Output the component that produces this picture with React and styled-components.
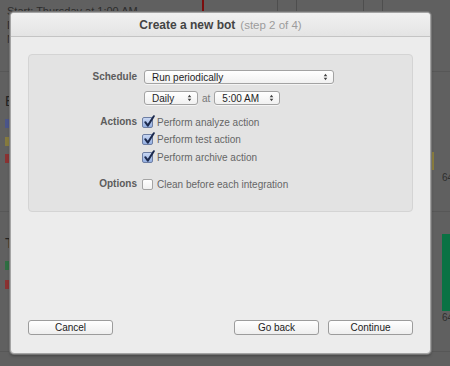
import React from "react";
import styled, { createGlobalStyle } from "styled-components";

const Global = createGlobalStyle`
  html, body { margin: 0; padding: 0; }
  body { width: 450px; height: 366px; overflow: hidden; font-family: "Liberation Sans", Arial, sans-serif; }
`;

const Screen = styled.div`
  position: relative;
  width: 450px;
  height: 366px;
  background: #606060;
  overflow: hidden;
`;

/* ---------- dimmed backdrop page ---------- */
const Backdrop = styled.div`
  display: flex;
  flex-direction: column;
`;

const Section = styled.div`
  position: relative;
  height: ${(p) => p.$h}px;
  border-bottom: 1px solid #575757;
  display: flex;
  flex-direction: column;
  padding: ${(p) => p.$pad || "0 0 0 7px"};
  box-sizing: border-box;
`;

const BgText = styled.div`
  font-size: 11px;
  line-height: 14px;
  color: #2c2c2c;
  white-space: nowrap;
`;

const BgHeading = styled.div`
  font-size: 14px;
  line-height: 16px;
  color: #222;
  margin-bottom: ${(p) => p.$mb}px;
`;

const Legend = styled.div`
  width: 6px;
  height: 9px;
  background: ${(p) => p.$c};
  margin-bottom: ${(p) => p.$mb}px;
`;

const Timeline = styled.div`
  position: absolute;
  left: 202px;
  top: 0;
  width: 2px;
  height: 20px;
  background: #7a0d0d;
`;

const Slot = styled.div`
  position: absolute;
  left: ${(p) => p.$x}px;
  top: 0;
  width: 18px;
  height: 14px;
  border: 1px solid #4e4e4e;
  border-top: none;
`;

const SideBar = styled.div`
  position: absolute;
  left: ${(p) => p.$x}px;
  top: ${(p) => p.$y}px;
  width: ${(p) => p.$w}px;
  height: ${(p) => p.$hh}px;
  background: ${(p) => p.$c};
`;

const SideClip = styled.div`
  position: absolute;
  left: 442px;
  top: ${(p) => p.$y}px;
  width: 8px;
  overflow: hidden;
`;

const SideLabel = styled.div`
  font-size: 10px;
  line-height: 12px;
  color: #2e2e2e;
  white-space: nowrap;
`;

/* ---------- dialog ---------- */
const Dialog = styled.div`
  position: absolute;
  left: 10px;
  top: 12px;
  width: 421px;
  height: 342px;
  box-sizing: border-box;
  background: #ececec;
  border: 1px solid #a4a4a4;
  border-radius: 4px;
  box-shadow: 0 0 0 1px #767676, 0 2px 3px rgba(0, 0, 0, 0.3);
  display: flex;
  flex-direction: column;
  overflow: hidden;
`;

const Header = styled.div`
  height: 23px;
  flex: none;
  background: linear-gradient(#f1f1f1, #e4e4e4);
  border-bottom: 1px solid #c4c4c4;
  display: flex;
  align-items: center;
  justify-content: center;
  gap: 5px;
  font-size: 12px;
`;

const Title = styled.span`
  font-weight: bold;
  color: #444;
`;

const Step = styled.span`
  color: #9c9c9c;
  font-size: 11.5px;
`;

const Body = styled.div`
  flex: 1;
  display: flex;
  flex-direction: column;
  padding: 17px 17px 18px 17px;
`;

const Panel = styled.div`
  height: 158px;
  box-sizing: border-box;
  background: #e3e3e3;
  border: 1px solid #d4d4d4;
  border-radius: 4px;
  padding: 15px 0 0 0;
  display: grid;
  grid-template-columns: 108px 1fr;
  column-gap: 7px;
  align-content: start;
`;

const Label = styled.div`
  grid-column: 1;
  text-align: right;
  font-size: 10px;
  font-weight: bold;
  color: #5c5c5c;
  line-height: 14px;
  margin-top: ${(p) => p.$mt || 0}px;
`;

const Controls = styled.div`
  grid-column: 2;
  display: flex;
  flex-direction: column;
  gap: ${(p) => p.$gap || 0}px;
  margin-top: ${(p) => p.$mt || 0}px;
`;

const Row = styled.div`
  display: flex;
  align-items: center;
  gap: 4px;
`;

const SelectBox = styled.div`
  width: ${(p) => p.$w}px;
  height: 14px;
  box-sizing: border-box;
  border: 1px solid #a3a3a3;
  border-radius: 3px;
  background: linear-gradient(#ffffff, #f1f1f1);
  box-shadow: 0 1px 0 rgba(255, 255, 255, 0.6);
  display: flex;
  align-items: center;
  justify-content: space-between;
  padding: 0 5px 0 7px;
  font-size: 10px;
  color: #1e1e1e;
`;

const At = styled.span`
  font-size: 10px;
  color: #777;
`;

const Check = styled.label`
  display: flex;
  align-items: center;
  gap: 4px;
  height: 14px;
  font-size: 10px;
  color: #666;
`;

const Box = styled.span`
  width: 11px;
  height: 11px;
  flex: none;
  position: relative;
  box-sizing: border-box;
  border: 1px solid ${(p) => (p.$on ? "#6d7ea3" : "#a4a4a4")};
  border-radius: 2px;
  background: ${(p) => (p.$on ? "linear-gradient(#c7d6f2, #95b0e2)" : "linear-gradient(#ffffff, #f0f0f0)")};
  margin-left: -2px;
`;

const Tick = styled.svg`
  position: absolute;
  left: 0;
  top: -3px;
  width: 12px;
  height: 13px;
`;

const Footer = styled.div`
  margin-top: auto;
  display: flex;
  align-items: center;
  gap: 9px;
`;

const Button = styled.button`
  width: 85px;
  height: 15px;
  box-sizing: border-box;
  padding: 0;
  border: 1px solid #9c9c9c;
  border-radius: 3px;
  background: linear-gradient(#ffffff, #eeeeee);
  font-family: "Liberation Sans", Arial, sans-serif;
  font-size: 10px;
  color: #222;
  line-height: 13px;
  margin-right: ${(p) => (p.$push ? "auto" : "0")};
`;

const Arrows = () => (
  <svg width="5" height="8" viewBox="0 0 5 8">
    <path d="M2.5 0.8 L4.3 3.2 L0.7 3.2 Z M2.5 7.2 L4.3 4.8 L0.7 4.8 Z" fill="#444" />
  </svg>
);

const Select = ({ w, children }) => (
  <SelectBox $w={w}>
    <span>{children}</span>
    <Arrows />
  </SelectBox>
);

const CheckItem = ({ on, children }) => (
  <Check>
    <Box $on={on}>
      {on && (
        <Tick viewBox="0 0 12 13">
          <path d="M2.3 7.2 L4.8 10.6 L10.8 1.2" fill="none" stroke="#1c2a4e" strokeWidth="2" strokeLinecap="round" strokeLinejoin="round" />
        </Tick>
      )}
    </Box>
    {children}
  </Check>
);

export default function App() {
  return (
    <Screen>
      <Global />
      <Backdrop>
        <Section $h={72} $pad="4px 0 0 7px">
          <BgText>Start: Thursday at 1:00 AM</BgText>
          <BgText>Duration</BgText>
          <BgText>Next</BgText>
          <Timeline />
          <Slot $x={277} />
          <Slot $x={363} />
        </Section>
        <Section $h={140} $pad="21px 0 0 5px">
          <BgHeading $mb={10}>E</BgHeading>
          <Legend $c="#4b5589" $mb={9} />
          <Legend $c="#857a3e" $mb={8} />
          <Legend $c="#8a3232" $mb={0} />
          <SideBar $x={431} $y={80} $w={3} $hh={18} $c="#8a7d3e" />
          <SideClip $y={100}>
            <SideLabel>64</SideLabel>
          </SideClip>
        </Section>
        <Section $h={140} $pad="23px 0 0 5px">
          <BgHeading $mb={10}>T</BgHeading>
          <Legend $c="#2f6e42" $mb={10} />
          <Legend $c="#8a3232" $mb={0} />
          <SideBar $x={442} $y={22} $w={8} $hh={77} $c="#0a7244" />
          <SideClip $y={100}>
            <SideLabel>64</SideLabel>
          </SideClip>
        </Section>
      </Backdrop>

      <Dialog>
        <Header>
          <Title>Create a new bot</Title>
          <Step>(step 2 of 4)</Step>
        </Header>
        <Body>
          <Panel>
            <Label>Schedule</Label>
            <Controls $gap={7}>
              <Select w={190}>Run periodically</Select>
              <Row>
                <Select w={54}>Daily</Select>
                <At>at</At>
                <Select w={66}>5:00 AM</Select>
              </Row>
            </Controls>

            <Label $mt={10}>Actions</Label>
            <Controls $mt={10} $gap={3.5}>
              <CheckItem on>Perform analyze action</CheckItem>
              <CheckItem on>Perform test action</CheckItem>
              <CheckItem on>Perform archive action</CheckItem>
            </Controls>

            <Label $mt={13}>Options</Label>
            <Controls $mt={13}>
              <CheckItem>Clean before each integration</CheckItem>
            </Controls>
          </Panel>
          <Footer>
            <Button $push>Cancel</Button>
            <Button>Go back</Button>
            <Button>Continue</Button>
          </Footer>
        </Body>
      </Dialog>
    </Screen>
  );
}
